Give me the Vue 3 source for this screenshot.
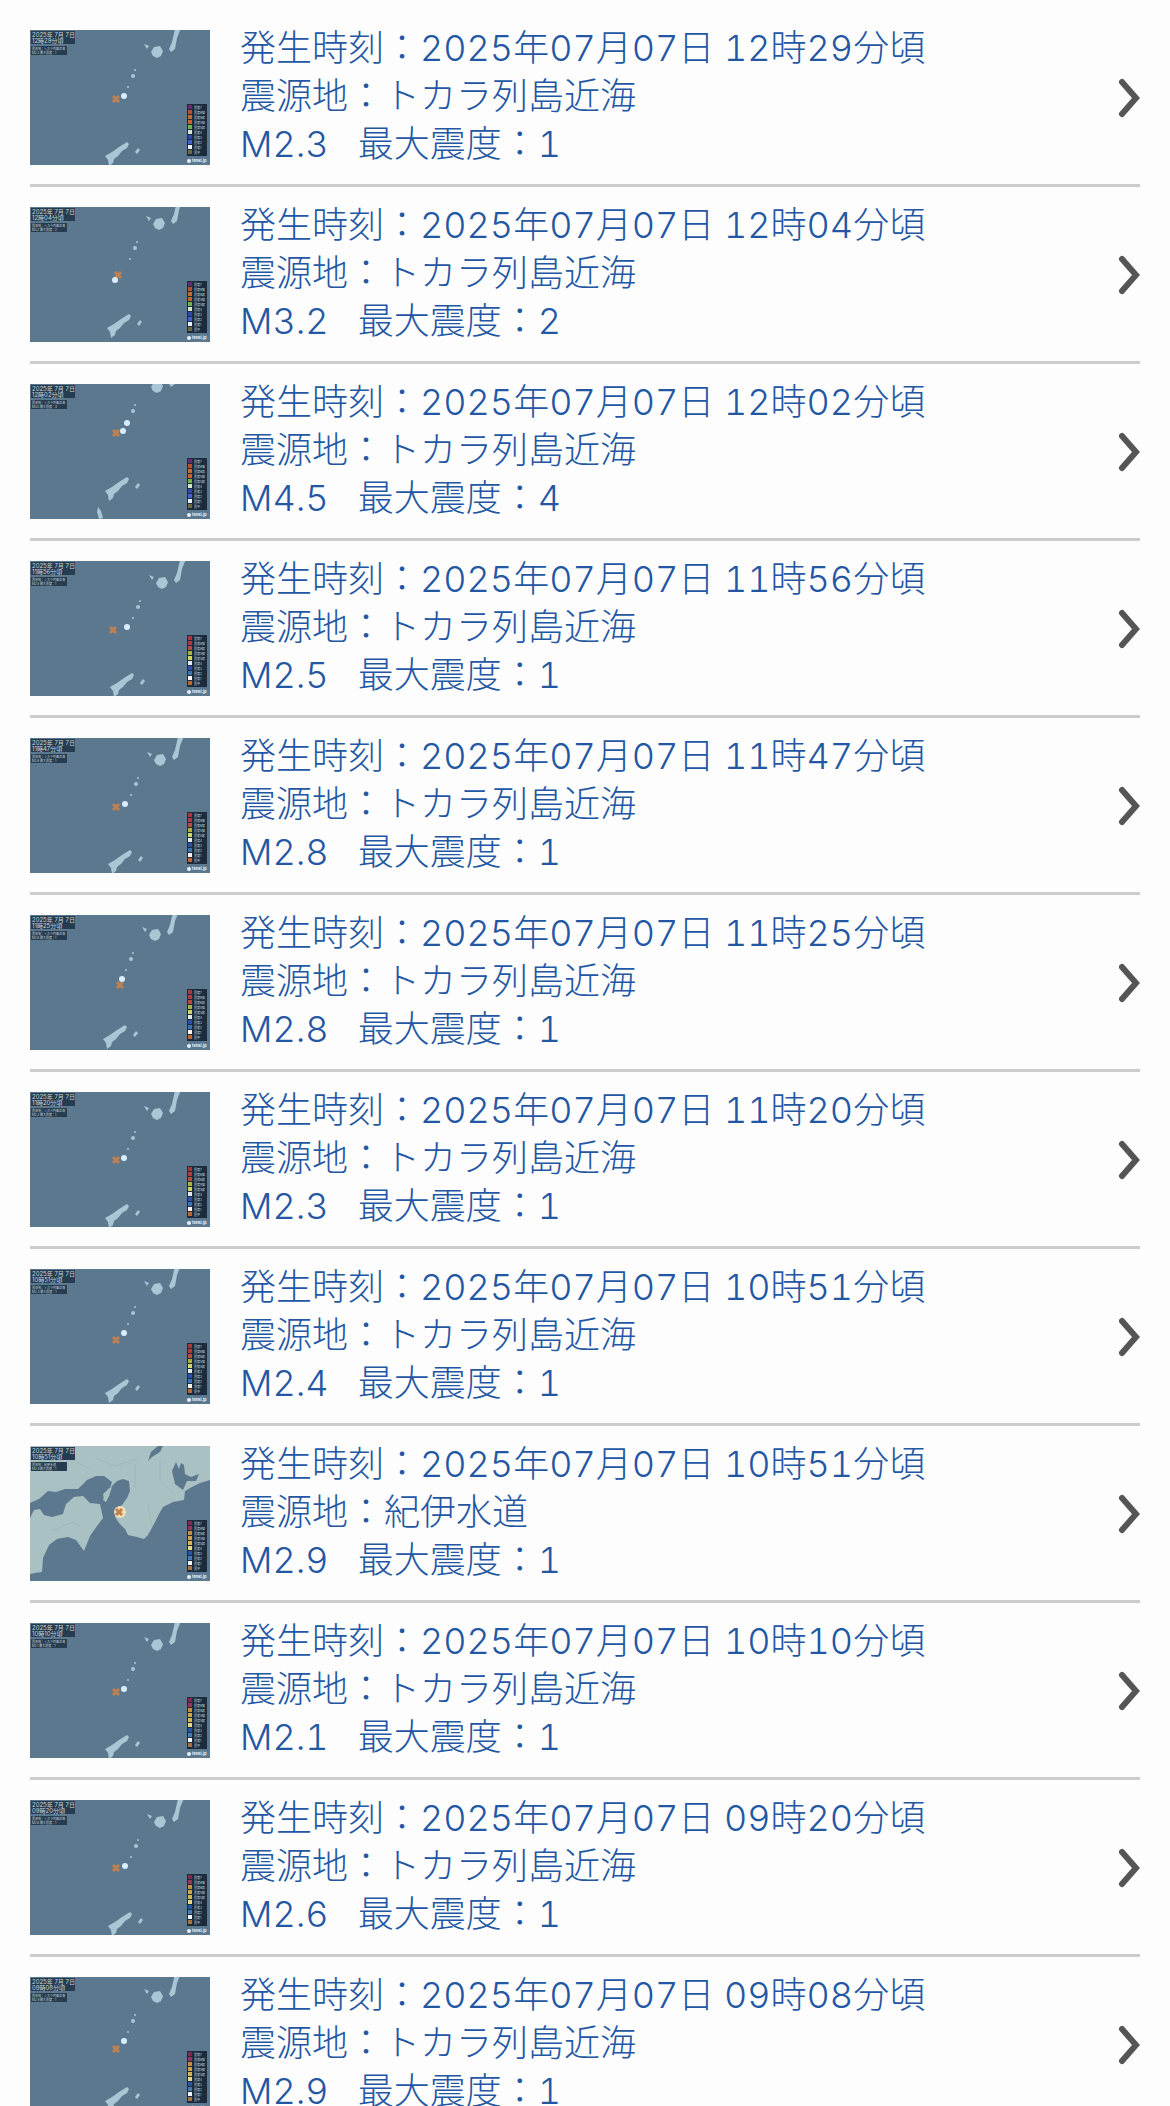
<template>
	<main class="history">
		<ul class="list">
			<li v-for="(quake, index) in quakes" :key="index" class="item">
				<a class="link" href="#">
					<svg class="map" viewBox="0 0 180 135" aria-hidden="true">
						<rect width="180" height="135" fill="#5c788f" />

						<!-- Kii channel -->
						<g v-if="quake.area === 'kii'">
							<path
								d="M0 0H180V34L170 37L162 41L155 45L154 54L143 56L133 61L129 68L124 78L118 89L114 93L107 91L98 89L95 83L89 77L85 71L87 63L92 59L97 52L100 45L99 35L93 33L87 35L81 41L74 54L73 48L80 42L82 36L74 30L66 30L57 34L48 43L35 43L26 46L18 45L9 53L0 57Z"
								fill="#a9c1c3"
							/>
							<path
								d="M0 72L4 64L10 63L14 69L22 71L33 68L36 58L44 51L53 50L60 57L70 58L73 72L67 80L60 90L54 105L46 94L38 91L27 93L19 99L13 112L12 126L5 127L0 128Z"
								fill="#a9c1c3"
							/>
							<path d="M73 54L78 43L82 41L79 50L76 56Z" fill="#a9c1c3" />
							<path
								d="M142 25L146 16L149 23L151 17L154 19L155 28L161 31L169 28L166 35L157 35L153 44L145 38Z"
								fill="#5c788f"
							/>
							<path d="M118 15L121 6L128 0H133L130 6L122 11Z" fill="#5c788f" />
							<path
								d="M5 16L40 13L65 25M65 12L85 20L110 12M105 18V42M118 60L122 80M130 15V35L145 49M20 85L43 76L50 80"
								fill="none"
								stroke="#91b5af"
								stroke-width="1"
								opacity="0.6"
							/>
						</g>

						<!-- Tokara islands -->
						<g
							v-else
							:transform="`translate(${quake.shift[0]} ${quake.shift[1]})`"
							fill="#a9c6d5"
						>
							<path d="M147 -10L151 -2L147 8L145 19L141 22L139 19L142 12Z" />
							<path
								d="M124 17L130 16L133 21L131 26L127 28L123 26L121 22Z"
							/>
							<path d="M114 14L119 16L117 19Z" />
							<circle cx="105" cy="40" r="1" />
							<circle cx="103" cy="46" r="2" />
							<circle cx="98" cy="57" r="1" />
							<path
								d="M97 112L99 114L97 118L92 121L88 126L84 129L83 133L79 136L78 130L75 126L82 122L89 117Z"
							/>
							<path d="M105 122L108 118L110 120L107 124Z" />
							<path d="M68 142L71 146L73 153L69 154L67 147Z" />
						</g>

						<circle
							v-if="quake.area === 'kii'"
							cx="90"
							cy="66"
							r="6"
							fill="#f1ddb9"
						/>
						<path
							:transform="`translate(${quake.epicentre[0]} ${quake.epicentre[1]})`"
							d="M-3 -3L3 3M3 -3L-3 3"
							stroke="#c0804f"
							stroke-width="3"
						/>
						<circle
							v-for="(dot, dotIndex) in quake.dots"
							:key="dotIndex"
							:cx="dot[0]"
							:cy="dot[1]"
							r="3"
							fill="#d9edff"
						/>

						<g fill="#263c50">
							<rect x="1" y="1" width="44" height="13" />
							<rect x="1" y="16" width="36" height="9" />
						</g>
						<g class="caption">
							<text x="2" y="7">2025年 7月 7日</text>
							<text x="2" y="13">{{ quake.time }}頃</text>
						</g>
						<g class="note">
							<text x="2" y="20">震源地：{{ quake.place }}</text>
							<text x="2" y="24">
								M{{ quake.magnitude }} 最大震度：{{ quake.intensity }}
							</text>
						</g>

						<rect x="157" y="74" width="20" height="52" fill="#1c2c3e" />
						<g
							v-for="(label, row) in legend"
							:key="label"
							:transform="`translate(158 ${75 + row * 5})`"
						>
							<rect
								width="4"
								height="4"
								:fill="palettes[quake.palette][row]"
							/>
							<text class="note" x="6" y="4">{{ label }}</text>
						</g>
						<circle cx="159" cy="131" r="2" fill="#e5f0fa" />
						<text class="brand" x="162" y="132">tenki.jp</text>
					</svg>

					<span class="details">
						<span>発生時刻：2025年07月07日 {{ quake.time }}頃</span>
						<span>震源地：{{ quake.place }}</span>
						<span>
							M{{ quake.magnitude }}&nbsp;&nbsp;&nbsp;最大震度：{{
								quake.intensity
							}}
						</span>
					</span>

					<svg class="arrow" viewBox="0 0 22 40" aria-hidden="true">
						<path
							d="M4 4L18 20L4 36"
							fill="none"
							stroke="#555"
							stroke-width="6"
							stroke-linecap="round"
						/>
					</svg>
				</a>
			</li>
		</ul>
	</main>
</template>

<script setup>
const legend = [
	'震度7',
	'震度6強',
	'震度6弱',
	'震度5強',
	'震度5弱',
	'震度4',
	'震度3',
	'震度2',
	'震度1',
	'震央'
]

const palettes = {
	orange: ['#682a75', '#b9522c', '#c56a30', '#c8632e', '#72b34a', '#d5e6c9', '#3047ac', '#4264d0', '#e9f2ff', '#6d6c3c'],
	red: ['#a83a3e', '#b43b3c', '#b84b44', '#a6b43c', '#d0d565', '#e2eaec', '#2d50af', '#3b75b8', '#fff5ed', '#bc6834'],
	yellow: ['#85284f', '#97345e', '#c18f3e', '#d0a548', '#d8b553', '#ead486', '#2756a4', '#487cb2', '#f0f8ff', '#ad7139']
}

/**
 * Create an earthquake around the Tokara islands
 * @param {string} time Time of the earthquake
 * @param {string} magnitude Magnitude
 * @param {number} intensity Maximum intensity
 * @param {string} palette Legend palette
 * @param {number[]} shift Offset of the islands on the map
 * @param {number[]} epicentre Epicentre on the map
 * @param {number[][]} dots Observation points on the map
 * @returns {object} Earthquake
 */
const tokara = (time, magnitude, intensity, palette, shift, epicentre, dots) => ({
	area: 'tokara',
	place: 'トカラ列島近海',
	time,
	magnitude,
	intensity,
	palette,
	shift,
	epicentre,
	dots
})

const quakes = [
	tokara('12時29分', '2.3', 1, 'orange', [0, 0], [86, 69], [[94, 66]]),
	tokara('12時04分', '3.2', 2, 'orange', [2, -5], [88, 68], [[85, 73]]),
	tokara('12時02分', '4.5', 4, 'orange', [0, -19], [86, 49], [[97, 39], [93, 47]]),
	tokara('11時56分', '2.5', 1, 'red', [5, 0], [83, 69], [[97, 66]]),
	tokara('11時47分', '2.8', 1, 'red', [3, 0], [86, 69], [[95, 66]]),
	tokara('11時25分', '2.8', 1, 'red', [-2, -2], [90, 70], [[92, 64]]),
	tokara('11時20分', '2.3', 1, 'red', [0, 0], [86, 68], [[94, 66]]),
	tokara('10時51分', '2.4', 1, 'red', [0, -2], [86, 71], [[94, 64]]),
	{
		area: 'kii',
		place: '紀伊水道',
		time: '10時51分',
		magnitude: '2.9',
		intensity: 1,
		palette: 'yellow',
		epicentre: [89, 66],
		dots: []
	},
	tokara('10時10分', '2.1', 1, 'yellow', [0, 0], [86, 69], [[94, 66]]),
	tokara('09時20分', '2.6', 1, 'yellow', [3, 0], [86, 68], [[95, 66]]),
	tokara('09時08分', '2.9', 1, 'yellow', [0, -2], [86, 72], [[94, 64]])
]
</script>

<style>
body {
	margin: 0;
	background-color: #fdfdfd;
}
</style>

<style scoped>
.history {
	padding: 10px 30px 0;
	font-family: Inter, 'Noto Sans CJK JP', sans-serif;
}

.list {
	margin: 0;
	padding: 0;
	list-style: none;
}

.item {
	border-bottom: 3px solid #ccc;
}

.link {
	display: flex;
	align-items: center;
	gap: 30px;
	padding: 14px 0 13px;
	color: #2457a3;
	text-decoration: none;
}

.map {
	width: 180px;
	height: 135px;
	flex-shrink: 0;
}

.details {
	display: flex;
	flex: 1;
	flex-direction: column;
	padding-bottom: 3px;
	font-size: 36px;
	font-weight: 300;
	font-variant-numeric: tabular-nums;
	line-height: 48px;
	white-space: nowrap;
}

.arrow {
	width: 22px;
	height: 40px;
	flex-shrink: 0;
}

.caption {
	fill: #c8d5df;
	font-size: 6px;
}

.note {
	fill: #c8d5df;
	font-size: 3px;
}

.brand {
	fill: #e5f0fa;
	font-size: 4px;
	font-weight: 700;
}
</style>
